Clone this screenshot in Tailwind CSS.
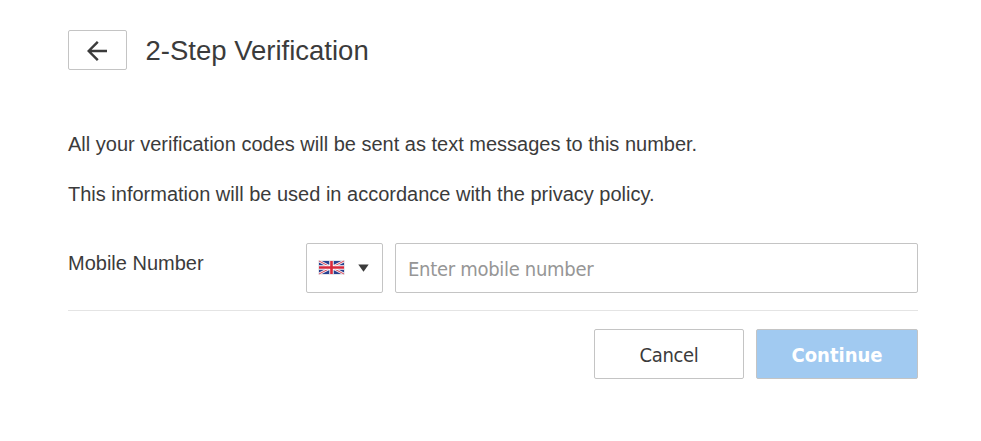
<!DOCTYPE html>
<html lang="en">
<head>
    <meta charset="UTF-8">
    <meta name="viewport" content="width=device-width, initial-scale=1.0">
    <title>2-Step Verification</title>
    <script src="https://cdn.jsdelivr.net/npm/@tailwindcss/browser@4"></script>
</head>
<body class="bg-white text-[#3b3b3b] font-['Liberation_Sans',Arial,sans-serif]">
    <main class="ml-[68px] w-[850px] pt-[30px]">
        <header class="flex items-center h-10">
            <button type="button" aria-label="Back" class="w-[59px] h-10 border border-[#c4c4c4] rounded-xs flex items-center justify-center">
                <svg class="w-5 h-5 mt-px mr-px" viewBox="0 0 20 20" fill="none" stroke="#3b3b3b" stroke-width="2.4">
                    <path d="M10.8 0.8 L1.7 10 L10.8 19.2 M2 10 H20"/>
                </svg>
            </button>
            <h1 class="ml-[18.5px] pt-0.5 text-[27.5px] leading-10 whitespace-nowrap">2-Step Verification</h1>
        </header>

        <section class="mt-[59px] text-[20px] leading-[30px] whitespace-nowrap">
            <p>All your verification codes will be sent as text messages to this number.</p>
            <p class="mt-5">This information will be used in accordance with the privacy policy.</p>
        </section>

        <form>
            <div class="mt-[34px] h-[68px] border-b border-[#e4e4e4] flex">
                <label for="mobile" class="w-[238px] text-[20px] leading-10">Mobile Number</label>
                <button type="button" aria-label="Country" class="w-[77px] h-[50px] border border-[#c4c4c4] rounded-xs flex items-center pl-[11px]">
                    <!-- United Kingdom flag -->
                    <svg class="w-[27px] h-[15px] -mt-px" viewBox="0 0 27 15">
                        <rect width="27" height="15" rx="1" fill="#e6e6ea"/>
                        <rect x="1" y="1" width="25" height="13" fill="#27408f"/>
                        <path d="M1 1 L26 14 M26 1 L1 14" stroke="#f4f0f4" stroke-width="2.6"/>
                        <path d="M1 1 L26 14 M26 1 L1 14" stroke="#d5475a" stroke-width="1"/>
                        <path d="M13.5 1 V14 M1 7.5 H26" stroke="#fff" stroke-width="4.4"/>
                        <path d="M13.5 1 V14 M1 7.5 H26" stroke="#d8283c" stroke-width="2.6"/>
                    </svg>
                    <svg class="w-[11px] h-2 ml-[13px] -mt-px" viewBox="0 0 11 8">
                        <path d="M0.3 0.5 H10.7 L5.5 7.8 Z" fill="#3b3b3b"/>
                    </svg>
                </button>
                <input id="mobile" type="text" placeholder="Enter mobile number" class="ml-3 w-[523px] h-[50px] border border-[#c4c4c4] rounded-xs px-3 pt-0.5 text-[20px] tracking-[-0.3px] placeholder:text-[#969696] font-['DejaVu_Sans_Condensed',Tahoma,sans-serif]">
            </div>

            <div class="mt-[18px] flex justify-end gap-3 text-[20px] font-['DejaVu_Sans_Condensed',Tahoma,sans-serif]">
                <button type="button" class="w-[150px] h-[50px] border border-[#c4c4c4] rounded-xs pt-0.5 tracking-[-0.3px]">Cancel</button>
                <button type="submit" class="w-[162px] h-[50px] border border-[#c4c4c4] rounded-xs pt-0.5 bg-[#a1caf1] text-white font-bold">Continue</button>
            </div>
        </form>
    </main>
</body>
</html>
